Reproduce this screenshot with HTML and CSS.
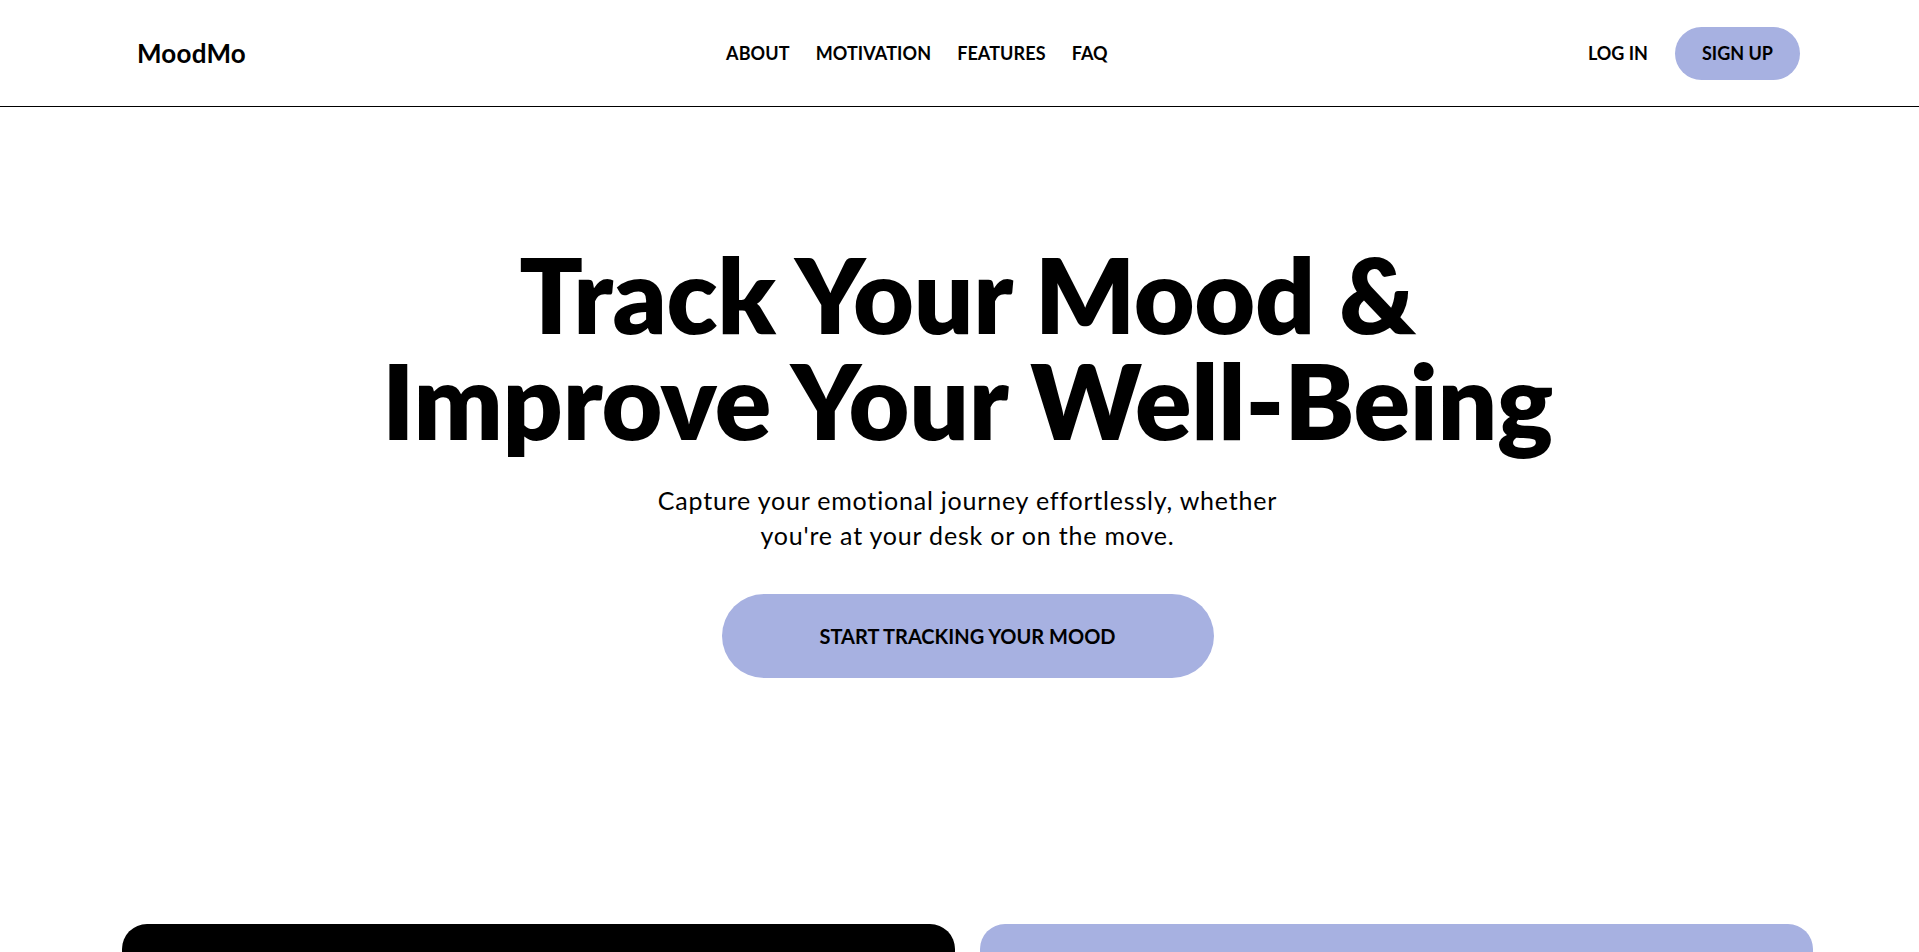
FILE: index.html
```html
<!DOCTYPE html>
<html lang="en">
<head>
<meta charset="utf-8">
<title>MoodMo</title>
<link rel="stylesheet" href="styles.css">
</head>
<body>
<header class="site-header">
  <div class="header-inner">
    <a class="logo" href="#">MoodMo</a>
    <nav class="main-nav">
      <a href="#">ABOUT</a>
      <a href="#">MOTIVATION</a>
      <a href="#">FEATURES</a>
      <a href="#">FAQ</a>
    </nav>
    <div class="header-actions">
      <a class="login" href="#">LOG IN</a>
      <a class="btn btn-small" href="#">SIGN UP</a>
    </div>
  </div>
</header>
<main class="page">
  <section class="hero">
    <h1 class="hero-title">Track Your Mood &amp;<br>Improve Your Well-Being</h1>
    <p class="hero-sub">Capture your emotional journey effortlessly, whether<br>you're at your desk or on the move.</p>
    <a class="btn btn-large" href="#">START TRACKING YOUR MOOD</a>
  </section>
  <section class="cards">
    <div class="card card-dark"></div>
    <div class="card card-light"></div>
  </section>
</main>
</body>
</html>
```

FILE: styles.css
```css
* { box-sizing: border-box; }
html, body { margin: 0; padding: 0; }
body {
  font-family: "Lato", "Noto Sans", sans-serif;
  color: #000;
  background: #fff;
  overflow: hidden;
}
a { color: inherit; text-decoration: none; }

.site-header {
  border-bottom: 1px solid #000;
}
.header-inner {
  height: 106px;
  display: flex;
  align-items: center;
  justify-content: space-between;
  padding: 0 119px 0 137px;
}
.logo {
  font-size: 26px;
  font-weight: 700;
  letter-spacing: 0.2px;
}
.main-nav {
  display: flex;
  gap: 26px;
  font-size: 18px;
  font-weight: 700;
  letter-spacing: 0.1px;
}
.header-actions {
  display: flex;
  align-items: center;
  gap: 27px;
  font-size: 18px;
  font-weight: 700;
}
.btn {
  display: inline-flex;
  align-items: center;
  justify-content: center;
  background: #a7b1e1;
  border-radius: 999px;
  font-weight: 700;
}
.btn-small {
  height: 53px;
  width: 125px;
  font-size: 18px;
}

.page {
  padding: 0 106px 0 122px;
}
.hero {
  display: flex;
  flex-direction: column;
  align-items: center;
  text-align: center;
  padding-top: 133px;
}
.hero-title {
  margin: 0;
  font-size: 105px;
  line-height: 106px;
  font-weight: 800;
  letter-spacing: -0.3px;
}
.hero-sub {
  margin: 31px 0 0;
  font-size: 25px;
  line-height: 35px;
  font-weight: 400;
  letter-spacing: 0.8px;
}
.btn-large {
  margin-top: 41px;
  width: 492px;
  height: 84px;
  font-size: 20px;
}
.cards {
  margin-top: 246px;
  display: grid;
  grid-template-columns: 1fr 1fr;
  gap: 25px;
}
.card {
  height: 400px;
  border-radius: 25px;
}
.card-dark { background: #000; }
.card-light { background: #a7b1e1; }
```
